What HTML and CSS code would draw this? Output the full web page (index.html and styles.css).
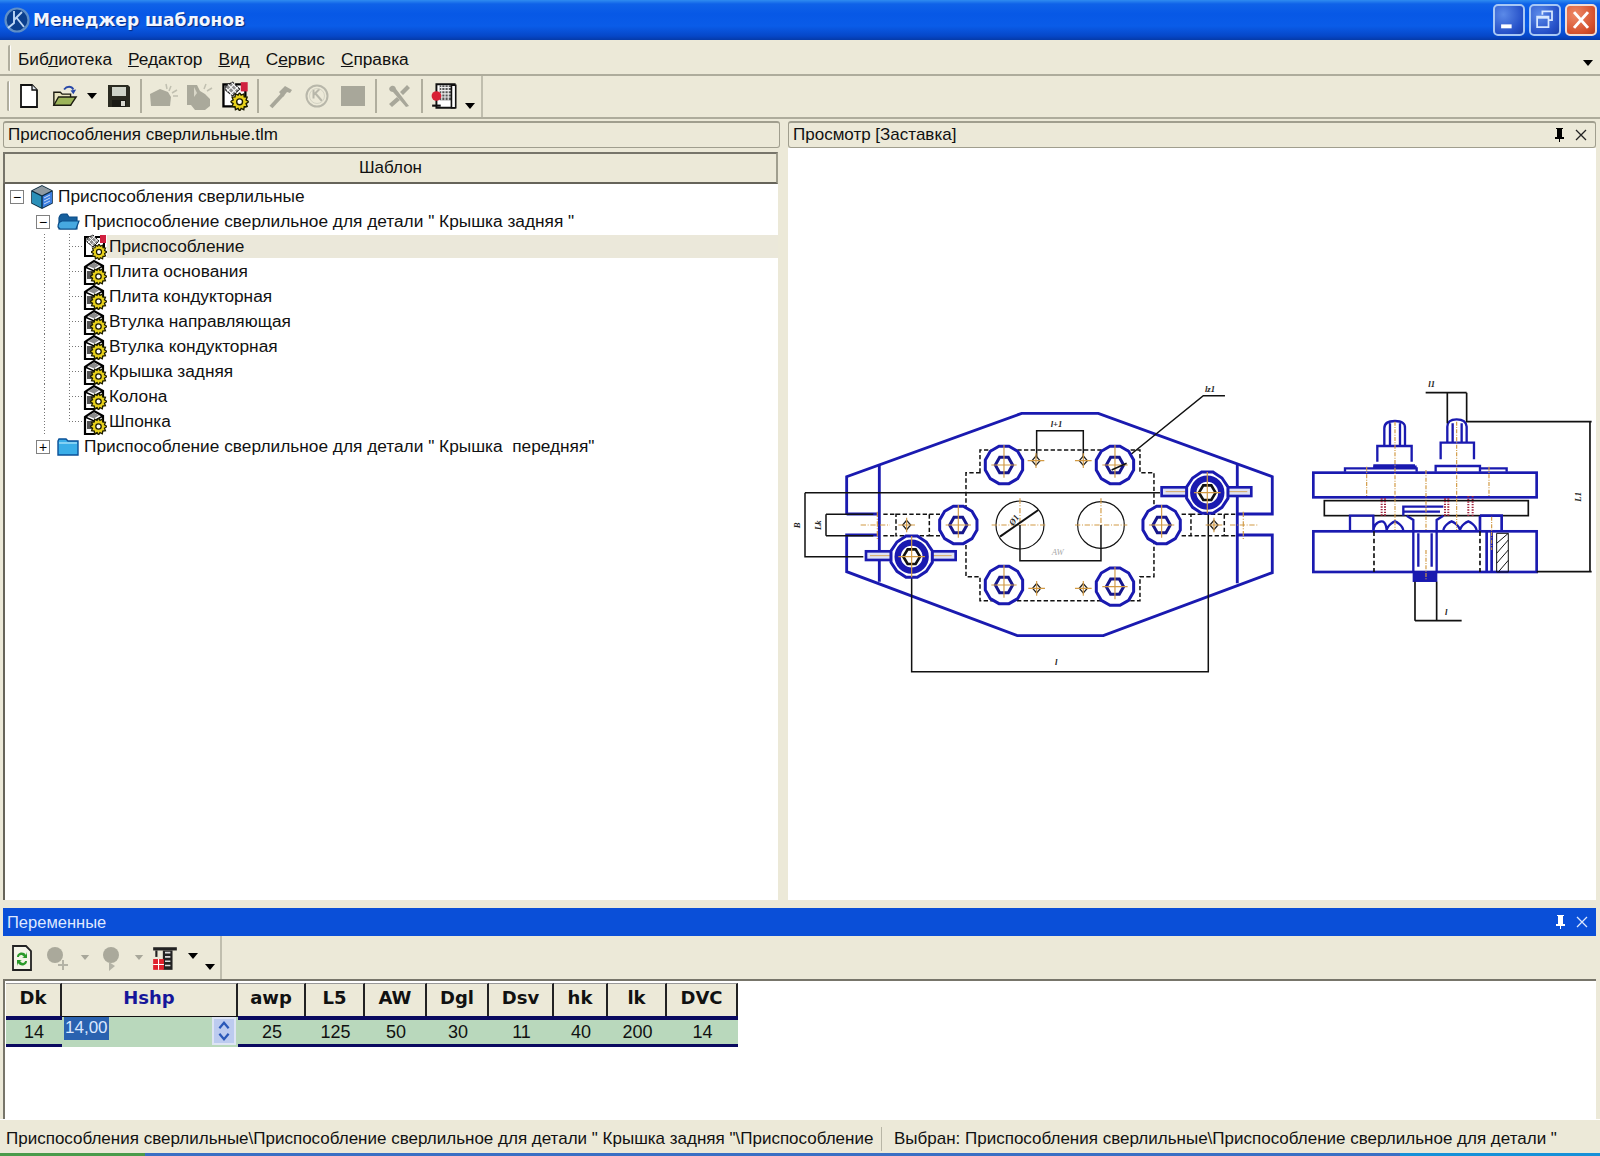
FILE: index.html
```html
<!DOCTYPE html>
<html lang="ru">
<head>
<meta charset="utf-8">
<title>Менеджер шаблонов</title>
<link rel="stylesheet" href="styles.css">
</head>
<body>
<svg class="defs" width="0" height="0" aria-hidden="true">
  <defs>
    <symbol id="i-gear" viewBox="0 0 12 12">
      <path d="M6 0l1 1.7 1.7-.8.3 1.9 1.9.2-.7 1.8L12 6l-1.800 1.200.7 1.800-1.900.2-.3 1.900L7 10.300 6 12l-1-1.700-1.700.8-.3-1.900-1.900-.2.7-1.800L0 6l1.800-1.200-.7-1.800 1.900-.2.3-1.900L5 1.700z" fill="#e8d21c" stroke="#1c1c00" stroke-width=".9"/>
      <circle cx="6" cy="6" r="1.900" fill="#fff" stroke="#1c1c00" stroke-width=".9"/>
    </symbol>
    <symbol id="i-part" viewBox="0 0 24 26">
      <path d="M2 8l9-6 9 5v14l-9 4H2z" fill="#fff" stroke="#000" stroke-width="2.200"/>
      <path d="M2 8l9 4 9-5M11 12v9" fill="none" stroke="#000" stroke-width="1.500"/>
      <path d="M5 7l6-3.500 5 3-5 3z" fill="#8a8a8a"/>
      <path d="M4 12h6v8H4z" fill="#555"/>
      <use href="#i-gear" x="7" y="9" width="17" height="17"/>
    </symbol>
    <symbol id="i-part-sel" viewBox="0 0 24 26">
      <path d="M2 3h19v19H2z" fill="#fff" stroke="#000" stroke-width="2"/>
      <path d="M4 4l6-3 6 6-6 6-6-5z" fill="#8d8d8d" stroke="#222" stroke-width="1"/>
      <path d="M6 3l7 7M9 1.500l6 6M4 6l6 6M12 2L5 9M14.500 5l-7 7" stroke="#fff" stroke-width=".9"/>
      <path d="M17 1h6v8h-6z" fill="#d02040"/>
      <use href="#i-gear" x="8" y="10" width="16" height="16"/>
    </symbol>
    <symbol id="i-root" viewBox="0 0 24 24">
      <path d="M12 1l10 5v12l-10 5-10-5V6z" fill="#5ab4d8" stroke="#0a2a40" stroke-width="1.600"/>
      <path d="M2 6l10 5v12L2 18z" fill="#2a8fb8"/>
      <path d="M12 1L2 6l10 5 10-5z" fill="#8e9aa2"/>
      <path d="M12 11l10-5v12l-10 5z" fill="#3c7ee0"/>
      <path d="M14 13l6-3M14 16l6-3M14 19l6-3" stroke="#c8dcf8" stroke-width="1"/>
      <path d="M2 6l10 5 10-5M12 11v12" fill="none" stroke="#0a2a40" stroke-width="1.300"/>
    </symbol>
    <symbol id="i-folder-open" viewBox="0 0 24 20">
      <path d="M3 6q1-4 4-4h4l2 3h8v12H3z" fill="#16609e" stroke="#0a4c88" stroke-width="1.200"/>
      <path d="M2 15q0-5 4-6h17l-3 8H4z" fill="#46a8e0" stroke="#0a4c88" stroke-width="1.200"/>
    </symbol>
    <symbol id="i-folder" viewBox="0 0 24 20">
      <path d="M2 4l1-2h7l2 2h10v14H2z" fill="#3aaee8" stroke="#0a5098" stroke-width="1.400"/>
      <path d="M3 6h18" stroke="#a4e0fa" stroke-width="1.400"/>
    </symbol>
    <symbol id="i-grey-a" viewBox="0 0 30 30">
      <path d="M2 13l10-5 8 3 3 5-1 9H3z" fill="#aaa99b"/>
      <path d="M21 10l2-5M24 12l5-3M25 15h5M19 8l-1-5" stroke="#c0bfb0" stroke-width="1.500"/>
    </symbol>
    <symbol id="i-grey-b" viewBox="0 0 30 30">
      <path d="M3 4h10l3 6 5 3 5 5v7l-5 4H11l-4-5H3z" fill="#aaa99b"/>
      <path d="M10 6l3 6-3 4z" fill="#d9d7c8"/>
      <path d="M20 8l2-5M23 10l5-3" stroke="#c0bfb0" stroke-width="1.500"/>
    </symbol>
    <symbol id="i-flat" viewBox="0 0 12 8"><path d="M1 1h10L6 7z" fill="#000"/></symbol>
    <symbol id="i-flat-g" viewBox="0 0 12 8"><path d="M1 1h10L6 7z" fill="#a8a79a"/></symbol>
    <g id="bolt">
      <polygon points="56,15 41,41 15,56 -15,56 -41,41 -56,15 -56,-15 -41,-41 -15,-56 15,-56 41,-41 56,-15" fill="#fff" stroke="#1a1ab0" stroke-width="9"/>
      <polygon points="26,0 13,23 -13,23 -26,0 -13,-23 13,-23" fill="#fff" stroke="#16168c" stroke-width="9"/>
      <path d="M-38 0H38M0-60V38" stroke="#d29a44" stroke-width="3.500"/>
    </g>
    <g id="wing">
      <rect x="-137" y="-16" width="269" height="26" fill="#dfe2f4" stroke="#1a1ab0" stroke-width="8"/>
      <path d="M-125-3h60M30-3h90" stroke="#d29a44" stroke-width="2.500"/>
      <polygon points="62,17 44,44 17,62 -17,62 -44,44 -62,17 -62,-17 -44,-44 -17,-62 17,-62 44,-44 62,-17" fill="#fff" stroke="#1a1ab0" stroke-width="9"/>
      <circle r="42" fill="#fff" stroke="#1a1ab0" stroke-width="19"/>
      <polygon points="25,0 12,22 -12,22 -25,0 -12,-22 12,-22" fill="#fff" stroke="#111" stroke-width="8"/>
      <path d="M-40 0H40M0-62V62" stroke="#d29a44" stroke-width="3.500"/>
    </g>
    <g id="hole">
      <path d="M0-14L12 0 0 14-12 0z" fill="#fff" stroke="#222" stroke-width="4"/>
      <path d="M-25 0H25M0-22V22" stroke="#d29a44" stroke-width="3.500"/>
    </g>
  </defs>
</svg>

<div class="window">
  <header class="titlebar">
    <svg class="app-logo" viewBox="0 0 28 28"><circle cx="14" cy="14" r="11.500" fill="#0b3f8e" stroke="#5f8fc8" stroke-width="2.200"/><path d="M11 5v12L5 22M11 14l8-8M13 11l8 10" fill="none" stroke="#bcd6f5" stroke-width="1.900"/></svg>
    <h1 class="title-text">Менеджер шаблонов</h1>
    <div class="caption-buttons">
      <span class="caption-btn"><svg viewBox="0 0 32 32"><rect x="7" y="21" width="12" height="4.500" fill="#fff"/></svg></span>
      <span class="caption-btn"><svg viewBox="0 0 32 32"><path d="M13 10V6h11v10h-4M7 12h13v12H7z" fill="none" stroke="#d8e8ff" stroke-width="2"/><path d="M7 13h13" stroke="#d8e8ff" stroke-width="3"/></svg></span>
      <span class="caption-btn caption-close"><svg viewBox="0 0 32 32"><path d="M8 7l16 18M24 7L8 25" stroke="#fff" stroke-width="3.400"/></svg></span>
    </div>
  </header>

  <nav class="menubar">
    <span class="grip grip-tall"></span>
    <span class="menu-item">Биб<u>л</u>иотека</span>
    <span class="menu-item"><u>Р</u>едактор</span>
    <span class="menu-item"><u>В</u>ид</span>
    <span class="menu-item">С<u>е</u>рвис</span>
    <span class="menu-item"><u>С</u>правка</span>
    <svg class="menu-more"><use href="#i-flat"/></svg>
  </nav>

  <div class="toolbar-row">
    <div class="toolbar">
      <span class="grip"></span>
      <span class="tb tb-first"><svg viewBox="0 0 26 26" class="ico"><path d="M5 2h11l5 5v17H5z" fill="#fff" stroke="#111" stroke-width="1.800"/><path d="M16 2v5h5" fill="#dfe6ee" stroke="#111" stroke-width="1.300"/></svg></span>
      <span class="tb"><svg viewBox="0 0 28 26" class="ico"><path d="M2 9h7l2 2h9v12H2z" fill="#e8e4c0" stroke="#1b1b10" stroke-width="1.500"/><path d="M2 23l5-9h19l-6 9z" fill="#9cb45a" stroke="#1b1b10" stroke-width="1.500"/><path d="M13 6c3-4 8-4 10 0" fill="none" stroke="#2848a8" stroke-width="2"/><path d="M20 7l6-1-3 5z" fill="#2848a8"/></svg></span>
      <span class="tb tb-arrow"><svg class="flat"><use href="#i-flat"/></svg></span>
      <span class="tb"><svg viewBox="0 0 26 26" class="ico"><path d="M2 2h20l2 2v20H2z" fill="#2a2a20"/><path d="M6 4h14v9H6z" fill="#cfd3c8"/><path d="M6 17h14v7H6z" fill="#1a1a14"/><path d="M15 18h4v5h-4z" fill="#d8d8d0"/></svg></span>
      <span class="tb-sep tb-sep-tight"></span>
      <span class="tb"><svg class="ico-lg"><use href="#i-grey-a"/></svg></span>
      <span class="tb"><svg class="ico-lg"><use href="#i-grey-b"/></svg></span>
      <span class="tb"><svg class="ico-lg"><use href="#i-part-sel"/></svg></span>
      <span class="tb-sep"></span>
      <span class="tb"><svg viewBox="0 0 26 26" class="ico"><path d="M3 24l12-13" stroke="#a8a79a" stroke-width="4"/><path d="M11 9l6-6 7 4-2 3-3-1-4 5z" fill="#a8a79a"/></svg></span>
      <span class="tb"><svg viewBox="0 0 26 26" class="ico"><circle cx="13" cy="13" r="10.500" fill="none" stroke="#b8b7aa" stroke-width="2"/><path d="M9.500 6.500v9M9.500 12l6-6M11 10l7 8" fill="none" stroke="#b8b7aa" stroke-width="2"/><circle cx="13" cy="13" r="7.500" fill="none" stroke="#d4d3c4" stroke-width="1"/></svg></span>
      <span class="tb"><span class="grey-square"></span></span>
      <span class="tb-sep"></span>
      <span class="tb"><svg viewBox="0 0 26 26" class="ico"><path d="M4 4c3-3 6 0 6 2l13 17-3 1L7 9C4 9 2 6 4 4z" fill="#a8a79a"/><path d="M21 2l3 3-7 7-3-3zM11 14l3 3-8 7-3-3z" fill="#a8a79a"/></svg></span>
      <span class="tb-sep"></span>
      <span class="tb"><svg viewBox="0 0 28 26" class="ico-lg"><path d="M6 2h17v22H6z" fill="#fff" stroke="#111" stroke-width="1.800"/><path d="M9 3h11v14H9z" fill="#555"/><path d="M9 5h11M9 8h11M9 11h11M9 14h11M11 3v14M14 3v14M17 3v14" stroke="#eee" stroke-width="1"/><circle cx="6" cy="13" r="4.500" fill="#d81f34"/><path d="M20 3h4v21h-4z" fill="#fff" stroke="#111" stroke-width="1.500"/><path d="M2 22h8" stroke="#111" stroke-width="2"/></svg></span>
      <span class="tb-more"><svg class="flat"><use href="#i-flat"/></svg></span>
    </div>
  </div>

  <main class="workspace">
    <section class="pane pane-left">
      <div class="pane-head">Приспособления сверлильные.tlm</div>
      <div class="tree-head">Шаблон</div>
      <div class="tree">
        <div class="row"><span class="pad0"></span><span class="exp">−</span><svg class="node-ico root-ico"><use href="#i-root"/></svg><span class="lbl lbl-root">Приспособления сверлильные</span></div>
        <div class="row"><span class="pad1"></span><span class="exp">−</span><svg class="node-ico folder-ico"><use href="#i-folder-open"/></svg><span class="lbl lbl-folder">Приспособление сверлильное для детали " Крышка задняя "</span></div>
        <div class="row"><span class="pad1"></span><span class="guide"></span><span class="guide branch"></span><svg class="node-ico part-ico"><use href="#i-part-sel"/></svg><span class="lbl lbl-sel">Приспособление</span></div>
        <div class="row"><span class="pad1"></span><span class="guide"></span><span class="guide branch"></span><svg class="node-ico part-ico"><use href="#i-part"/></svg><span class="lbl">Плита основания</span></div>
        <div class="row"><span class="pad1"></span><span class="guide"></span><span class="guide branch"></span><svg class="node-ico part-ico"><use href="#i-part"/></svg><span class="lbl">Плита кондукторная</span></div>
        <div class="row"><span class="pad1"></span><span class="guide"></span><span class="guide branch"></span><svg class="node-ico part-ico"><use href="#i-part"/></svg><span class="lbl">Втулка направляющая</span></div>
        <div class="row"><span class="pad1"></span><span class="guide"></span><span class="guide branch"></span><svg class="node-ico part-ico"><use href="#i-part"/></svg><span class="lbl">Втулка кондукторная</span></div>
        <div class="row"><span class="pad1"></span><span class="guide"></span><span class="guide branch"></span><svg class="node-ico part-ico"><use href="#i-part"/></svg><span class="lbl">Крышка задняя</span></div>
        <div class="row"><span class="pad1"></span><span class="guide"></span><span class="guide branch"></span><svg class="node-ico part-ico"><use href="#i-part"/></svg><span class="lbl">Колона</span></div>
        <div class="row"><span class="pad1"></span><span class="guide"></span><span class="guide branch last"></span><svg class="node-ico part-ico"><use href="#i-part"/></svg><span class="lbl">Шпонка</span></div>
        <div class="row"><span class="pad1"></span><span class="exp">+</span><svg class="node-ico folder-ico"><use href="#i-folder"/></svg><span class="lbl lbl-folder">Приспособление сверлильное для детали " Крышка  передняя"</span></div>
      </div>
    </section>

    <section class="pane pane-right">
      <div class="pane-head pane-head-tools">
        <span>Просмотр [Заставка]</span>
        <span class="pane-tools">
          <svg class="pin" viewBox="0 0 12 16"><path d="M3 1h7v1H9v8h2v2H7v3H6v-3H2v-2h2V2H3z" fill="#000"/></svg>
          <svg class="closex" viewBox="0 0 14 14"><path d="M2 2l10 10M12 2L2 12" stroke="#222" stroke-width="1.300"/></svg>
        </span>
      </div>
      <div class="preview">
        <svg class="drawing" viewBox="788 148 807 749">
          <g transform="translate(790 370) scale(.3333)" fill="none">
            <path d="M170 432V320L695 130H925L1447 320V432H1340M1340 495H1447V608L940 797H682L170 605V495H268M170 432H268" stroke="#1a1ab0" stroke-width="8.500"/>
            <path d="M268 285V635M1342 285V640" stroke="#1a1ab0" stroke-width="8.500"/>
            <path d="M570 308V240H1050V308H1092V620H1050V692H570V620H528V308zM318 433H418V497H318zM1203 433H1303V497H1203zM280 433H318M280 497H318M418 433H450M418 497H450M1175 433H1203M1175 497H1203M1303 433H1340M1303 497H1340" stroke="#111" stroke-width="4.500" stroke-dasharray="13 7"/>
            <circle cx="690" cy="465" r="72" stroke="#111" stroke-width="3.500"/>
            <circle cx="933" cy="465" r="70" stroke="#111" stroke-width="3.500"/>
            <path d="M605 465H770M690 385V465M855 465H1012M933 385V465M212 465H300M262 425V510M1320 465H1405M1360 425V510" stroke="#d29a44" stroke-width="3.500" stroke-dasharray="16 5 3 5"/>
            <path d="M45 368H1110M45 368V560H220M108 433H250M108 497H250M108 433V497M365 620V905H1255V430M740 270V182H880V270M1305 77H1240L965 300M690 465V572H933V465" stroke="#111" stroke-width="4.500"/>
            <path d="M630 500L745 420" stroke="#111" stroke-width="6"/>
            <use href="#bolt" x="642" y="285"/>
            <use href="#bolt" x="975" y="285"/>
            <use href="#bolt" x="642" y="645"/>
            <use href="#bolt" x="975" y="650"/>
            <use href="#bolt" x="505" y="465"/>
            <use href="#bolt" x="1115" y="465"/>
            <use href="#hole" x="738" y="272"/>
            <use href="#hole" x="880" y="272"/>
            <use href="#hole" x="740" y="655"/>
            <use href="#hole" x="880" y="655"/>
            <use href="#hole" x="350" y="465"/>
            <use href="#hole" x="1272" y="465"/>
            <use href="#wing" x="365" y="560"/>
            <use href="#wing" x="1252" y="368"/>
            <path d="M1010 280L965 300" stroke="#111" stroke-width="5"/>
            <text class="dim" x="1245" y="65">lz1</text>
            <text class="dim" x="782" y="172">l+1</text>
            <text class="dim" x="795" y="885">l</text>
            <text class="dim dim-faint" x="785" y="555">AW</text>
            <text class="dim" transform="translate(30 475) rotate(-90)">B</text>
            <text class="dim" transform="translate(92 480) rotate(-90)">Lk</text>
            <text class="dim" transform="translate(670 468) rotate(-55)">Ø1</text>
          </g>
          <g transform="translate(1290 370) scale(.3333)" fill="none">
            <rect x="70" y="308" width="670" height="74" stroke="#1a1ab0" stroke-width="8"/>
            <rect x="103" y="392" width="612" height="45" stroke="#111" stroke-width="5"/>
            <rect x="70" y="484" width="670" height="122" stroke="#1a1ab0" stroke-width="8"/>
            <path d="M180 484V437H250V484M250 437V484M340 437V410H460M340 425H450M370 484V450L350 437M440 484V450L460 437M250 484c0-15 10-30 25-30s15 30 15 30c0-20 25-30 25-30s25 10 25 30M460 484c0-20 25-30 25-30s25 10 25 30c0-20 25-30 25-30s25 10 25 30" stroke="#1a1ab0" stroke-width="7"/>
            <path d="M283 228V175Q283 153 315 153T345 175V228M300 160V228M330 160V228M262 275V228H365V275M165 305V295H380V305M250 290H380" stroke="#1a1ab0" stroke-width="7"/>
            <path d="M472 218V170Q472 148 500 148T530 170V218M488 160V218M515 160V218M452 268V218H552V268M437 305V288H570V305M570 295H650V305" stroke="#1a1ab0" stroke-width="7"/>
            <path d="M250 283H375V296H250z" fill="#1a1ab0"/>
            <path d="M370 484V606M440 484V606M385 490V590M425 490V590" stroke="#1a1ab0" stroke-width="7"/>
            <rect x="370" y="606" width="70" height="28" fill="#1a1ab0" stroke="#1a1ab0" stroke-width="4"/>
            <path d="M570 437H635V484M570 437V484M590 484V606M605 484V606" stroke="#1a1ab0" stroke-width="8"/>
            <path d="M252 484V606M570 484V606" stroke="#111" stroke-width="5" stroke-dasharray="14 8"/>
            <path d="M620 490h35v116h-35zM620 520l35-30M620 550l35-40M620 580l35-40M625 606l30-35" stroke="#111" stroke-width="3"/>
            <path d="M275 385V440M285 385V440M465 385V440M475 385V440M535 378V440M548 378V440" stroke="#a0233c" stroke-width="6" stroke-dasharray="4 4"/>
            <path d="M230 290V380M315 155V480M408 300V480M408 540V630M500 155V480M597 290V380M605 440V540" stroke="#d29a44" stroke-width="3.500" stroke-dasharray="12 4 3 4"/>
            <path d="M407 68H530M472 68V160M530 68V155H905M900 155V605M740 605H905M375 635V752M440 635V752M375 752H515" stroke="#111" stroke-width="5"/>
            <text class="dim" x="415" y="52">l1</text>
            <text class="dim" x="465" y="735">l</text>
            <text class="dim" transform="translate(872 395) rotate(-90)">L1</text>
          </g>
        </svg>
      </div>
    </section>
  </main>

  <section class="vars">
    <div class="vars-title">
      <span>Переменные</span>
      <span class="pane-tools">
        <svg class="pin" viewBox="0 0 12 16"><path d="M3 1h7v1H9v8h2v2H7v3H6v-3H2v-2h2V2H3z" fill="#fff"/></svg>
        <svg class="closex" viewBox="0 0 14 14"><path d="M2 2l10 10M12 2L2 12" stroke="#dce8ff" stroke-width="1.300"/></svg>
      </span>
    </div>
    <div class="vars-toolbar-row">
      <div class="vars-toolbar">
        <span class="vt"><svg viewBox="0 0 24 28" class="ico-v"><path d="M3 2h13l5 5v19H3z" fill="#f4f4e8" stroke="#222" stroke-width="1.800"/><path d="M7 13c0-5 7-6 9-2l1-3v6h-5l2-1c-2-3-5-2-5 0zM17 17c0 5-7 6-9 2l-1 3v-6h5l-2 1c2 3 5 2 5 0z" fill="#2a9a2a"/></svg></span>
        <span class="vt vt-next"><svg viewBox="0 0 24 28" class="ico-v"><ellipse cx="10" cy="11" rx="8" ry="8" fill="#aaa99b"/><path d="M18 16v10M13 21h10" stroke="#b4b3a6" stroke-width="2"/></svg></span>
        <svg class="flat-s"><use href="#i-flat-g"/></svg>
        <span class="vt vt-next"><svg viewBox="0 0 24 28" class="ico-v"><ellipse cx="12" cy="11" rx="8" ry="8" fill="#aaa99b"/><path d="M10 18l6 4-6 5z" fill="#b4b3a6"/></svg></span>
        <svg class="flat-s"><use href="#i-flat-g"/></svg>
        <span class="vt vt-next"><svg viewBox="0 0 24 26" class="ico-v"><path d="M1 3h22v3H1z" fill="#222"/><path d="M19 6v18h-9V6z" fill="#222"/><path d="M4 6v6" stroke="#222" stroke-width="2"/><path d="M12 8h5M12 12h5M12 16h5M12 20h5" stroke="#ddd" stroke-width="1.500"/><rect x="1" y="14" width="10" height="10" fill="#e0202c"/><path d="M6 14v10M1 19h10" stroke="#fff" stroke-width="1"/></svg></span>
        <svg class="flat-k"><use href="#i-flat"/></svg>
        <svg class="flat-m"><use href="#i-flat"/></svg>
      </div>
    </div>
    <div class="grid">
      <div class="cols cols-head">
        <span>Dk</span><span class="active-col">Hshp</span><span>awp</span><span>L5</span><span>AW</span><span>Dgl</span><span>Dsv</span><span>hk</span><span>lk</span><span>DVC</span>
      </div>
      <div class="cols cols-row">
        <span>14</span>
        <span class="edit"><span class="edit-sel">14,00</span><span class="spin"><svg viewBox="0 0 12 26"><path d="M1 10l5-6 5 6M1 16l5 6 5-6" fill="none" stroke="#2a58b8" stroke-width="2.400"/></svg></span></span>
        <span>25</span><span>125</span><span>50</span><span>30</span><span>11</span><span>40</span><span>200</span><span>14</span>
      </div>
    </div>
  </section>

  <footer class="status">
    <span class="status-a">Приспособления сверлильные\Приспособление сверлильное для детали " Крышка задняя "\Приспособление</span>
    <span class="status-b">Выбран: Приспособления сверлильные\Приспособление сверлильное для детали "</span>
  </footer>
  <div class="taskbar"><span class="task-start"></span><span class="task-main"></span><span class="task-tray"></span></div>
</div>
</body>
</html>
```
FILE: styles.css
```css
* { box-sizing: border-box; }
html, body { margin: 0; padding: 0; }
body {
  width: 1600px; height: 1156px; overflow: hidden;
  background: #ece9d8; color: #111;
  font-family: "Liberation Sans", Arial, sans-serif; font-size: 17px;
}
.defs { display: block; height: 0; }
.window { width: 1600px; height: 1156px; display: flex; flex-direction: column; }

/* title */
.titlebar {
  height: 40px; flex: none; display: flex; align-items: center; padding: 0 3px 0 3px;
  background: linear-gradient(to bottom, #2f8cf0 0, #0f62e8 4px, #0758e6 14px, #0a5ce8 26px, #0647c8 36px, #053aa8 40px);
}
.app-logo { width: 28px; height: 28px; flex: none; }
.title-text {
  margin: 0 0 0 2px; font: bold 17px "DejaVu Sans", sans-serif; color: #f2f6ff;
  text-shadow: 1px 1px 1px #062a80;
}
.caption-buttons { margin-left: auto; display: flex; gap: 4px; }
.caption-btn {
  width: 32px; height: 32px; border: 2px solid #a8c8f5; border-radius: 5px;
  background: radial-gradient(circle at 30% 30%, #5b8ae8, #2550c8 70%, #1c40a8);
}
.caption-btn svg { display: block; width: 28px; height: 28px; }
.caption-close { background: radial-gradient(circle at 30% 30%, #ee8a68, #d4502c 70%, #b43c20); border-color: #f0dcd4; }

/* menu */
.menubar {
  height: 35px; flex: none; margin-top: 1px; display: flex; align-items: center; padding: 3px 0 0 8px;
  border-bottom: 2px solid #aeac9c; background: #ece9d8;
}
.grip { display: block; width: 3px; height: 30px; border-left: 2px solid #b0ae9e; border-right: 1px solid #fff; border-radius: 2px; flex: none; }
.grip-tall { height: 26px; margin-right: 7px; margin-top: -3px; }
.menu-item { margin-right: 16px; font-size: 17.300px; }
.menu-item:last-of-type { margin-right: 0; }
.menu-more { margin-left: auto; margin-right: 6px; margin-top: 8px; width: 12px; height: 8px; }

/* toolbar */
.toolbar-row { height: 43px; flex: none; display: flex; border-bottom: 2px solid #aeac9c; }
.toolbar {
  width: 478px; margin-left: 5px; padding: 0 0 2px 2px; display: flex; align-items: center;
  border-right: 2px solid #c0beae;
}
.tb { width: 36px; height: 36px; display: flex; align-items: center; justify-content: center; flex: none; }
.tb-first { margin-left: 1px; }
.tb-arrow { width: 18px; }
.tb-sep { width: 2px; height: 34px; margin: 0 4px; background: #b0ae9e; flex: none; }
.tb-sep-tight { margin: 0 3px; }
.ico { width: 26px; height: 26px; display: block; }
.ico-lg { width: 30px; height: 30px; display: block; }
.flat { width: 12px; height: 8px; display: block; }
.tb-more { width: 14px; align-self: flex-end; margin-bottom: 5px; margin-left: 1px; }
.grey-square { display: block; width: 24px; height: 20px; background: #a8a79a; }

/* panes */
.workspace { height: 789px; flex: none; display: flex; gap: 8px; padding: 2px 4px 8px 3px; }
.pane { display: flex; flex-direction: column; min-width: 0; }
.pane-left { width: 777px; flex: none; }
.pane-right { flex: 1; }
.pane-head {
  height: 27px; flex: none; display: flex; align-items: center; padding-left: 4px;
  border: 1px solid #a09e8e; border-top-width: 2px; border-radius: 3px; background: #ece9d8; font-size: 17px;
}
.pane-head-tools { justify-content: space-between; padding-right: 7px; }
.pane-tools { display: flex; align-items: center; gap: 9px; }
.pin { width: 12px; height: 16px; display: block; }
.closex { width: 14px; height: 14px; display: block; }
.tree-head {
  height: 32px; flex: none; margin: 4px 2px 0 0; display: flex; align-items: center; justify-content: center;
  border: 2px solid #77756a; border-bottom-color: #66645a; border-right-color: #a09e8e; background: #ece9d8; font-size: 17px;
}
.tree { flex: 1; margin-right: 2px; background: #fff; border-left: 2px solid #66645a; }
.row { height: 25px; display: flex; align-items: center; }
.pad0 { width: 5px; flex: none; }
.pad1 { width: 31px; flex: none; }
.exp {
  width: 14px; height: 14px; flex: none; display: flex; align-items: center; justify-content: center;
  border: 1px solid #808080; background: #fff; font: 14px/1 "Liberation Sans", sans-serif; color: #000;
}
.node-ico { flex: none; display: block; }
.root-ico { width: 24px; height: 24px; margin-left: 6px; }
.folder-ico { width: 24px; height: 20px; margin-left: 6px; }
.part-ico { width: 24px; height: 26px; }
.guide {
  width: 25px; align-self: stretch; flex: none;
  background: repeating-linear-gradient(to bottom, #777 0 1px, transparent 1px 3px) 8px 0 / 1px 100% no-repeat;
}
.guide.branch {
  width: 22px;
  background:
    repeating-linear-gradient(to bottom, #777 0 1px, transparent 1px 3px) 8px 0 / 1px 100% no-repeat,
    repeating-linear-gradient(to right, #777 0 1px, transparent 1px 3px) 8px 12px / 14px 1px no-repeat;
}
.guide.branch.last {
  background:
    repeating-linear-gradient(to bottom, #777 0 1px, transparent 1px 3px) 8px 0 / 1px 13px no-repeat,
    repeating-linear-gradient(to right, #777 0 1px, transparent 1px 3px) 8px 12px / 14px 1px no-repeat;
}
.lbl { margin-left: 2px; white-space: pre; font-size: 17.300px; }
.lbl-root { margin-left: 4px; }
.lbl-folder { margin-left: 4px; }
.lbl-sel { flex: 1; height: 23px; line-height: 23px; background: #ebe8da; margin-left: 0; padding-left: 2px; }

.preview { flex: 1; background: #fff; min-height: 0; }
.drawing { display: block; width: 807px; height: 749px; }
.dim { font: italic bold 26px "Liberation Serif", serif; fill: #222; }
.dim-faint { fill: #aaa; font-weight: normal; }

/* variables */
.vars { flex: none; display: flex; flex-direction: column; padding: 0 4px 0 3px; }
.vars-title {
  height: 28px; flex: none; display: flex; align-items: center; justify-content: space-between; padding: 0 7px 0 4px;
  background: #0a4fd8; color: #dfe8ff; font-size: 16.500px;
}
.vars-toolbar-row { height: 45px; flex: none; border-bottom: 2px solid #77756a; }
.vars-toolbar {
  width: 219px; height: 43px; display: flex; align-items: center; padding-left: 6px;
  border-right: 2px solid #c0beae;
}
.vt { width: 27px; display: block; flex: none; }
.ico-v { width: 26px; height: 28px; display: block; }
.vt-next { margin-left: 8px; }
.flat-s { width: 10px; height: 7px; flex: none; margin-left: 9px; display: block; }
.flat-k { width: 12px; height: 8px; flex: none; margin-left: 8px; margin-bottom: 4px; display: block; }
.flat-m { width: 12px; height: 8px; flex: none; margin-left: 5px; margin-top: 18px; display: block; }

.grid { height: 138px; flex: none; background: #fff; border-left: 2px solid #77756a; padding: 2px 0 0 1px; }
.cols { display: grid; grid-template-columns: 56px 176px 68px 59px 62px 62px 65px 54px 59px 71px; width: 732px; text-align: center; }
.cols-head span {
  height: 33px; display: flex; align-items: center; justify-content: center; padding-bottom: 5px;
  background: #ece9d8; border-right: 2px solid #222; border-top: 1px solid #999;
  font: bold 18px "DejaVu Sans", sans-serif; color: #111;
}
.cols-head .active-col { color: #16169a; }
.cols-row span { height: 31px; }
.cols-row > span {
  display: flex; align-items: center; justify-content: center;
  background: #b9d8bc; border-top: 4px solid #0a0a60; border-bottom: 3px solid #0a0a60; font-size: 18px;
}
.cols-row > .edit {
  align-items: flex-start; justify-content: space-between; padding: 0 2px 0 2px;
  border-top: 1px solid #111; border-bottom: 0; background: #b9d8bc;
}
.cols-row .edit-sel { height: 23px; line-height: 22px; background: #2a62b0; color: #dbe8ff; padding: 0 1px; font-size: 17px; }
.cols-row .spin { width: 24px; height: 28px; background: #bccbef; border: 2px solid #dde4f4; display: block; }
.spin svg { display: block; width: 20px; height: 24px; }

/* status */
.status {
  height: 34px; flex: none; display: flex; align-items: center; padding: 4px 0 0 6px; white-space: pre; font-size: 17px;
  background: #ece9d8; border-top: 1px solid #fff;
}
.status-a { width: 876px; flex: none; height: 24px; line-height: 24px; border-right: 1px solid #b8b6a6; }
.status-b { margin-left: 12px; }
.taskbar { height: 3px; flex: none; display: flex; }
.task-start { width: 145px; background: #4a9a4a; }
.task-main { flex: 1; background: #3a6fc4; }
.task-tray { width: 200px; background: #1790d8; }
```
